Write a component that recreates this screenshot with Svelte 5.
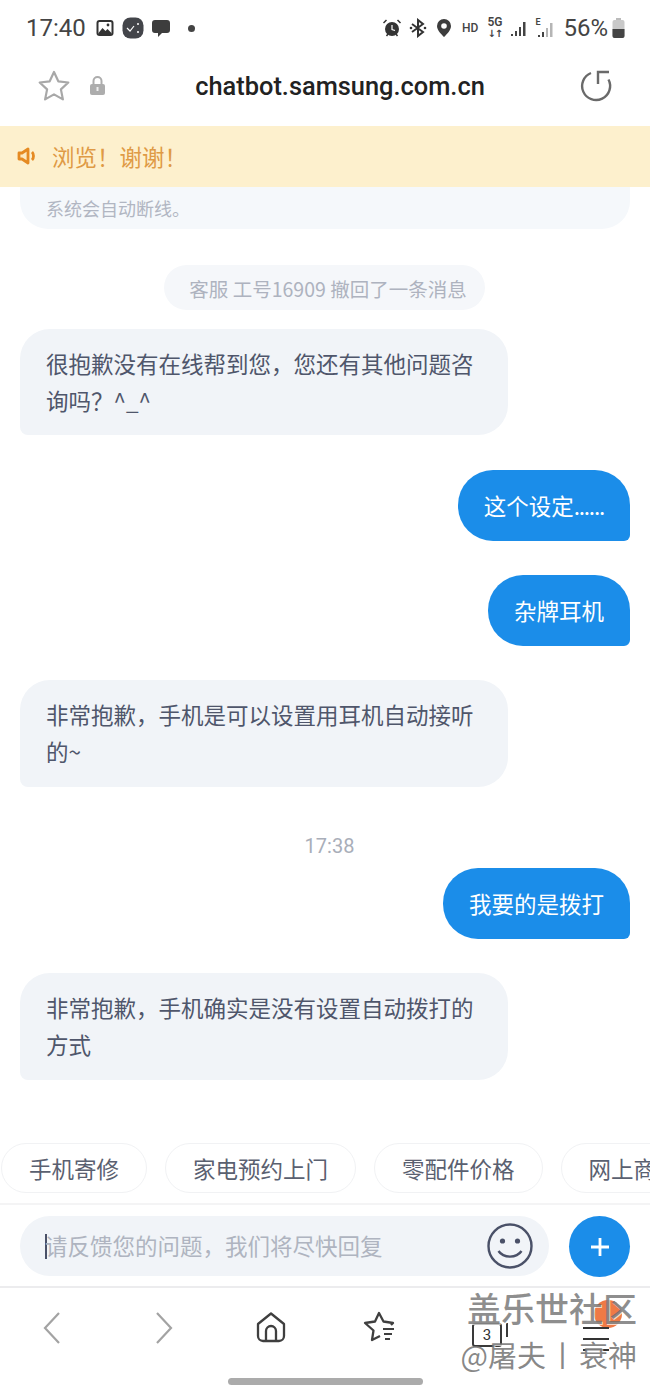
<script>
    // Quick reply chips under the chat
    let chips = ["手机寄修", "家电预约上门", "零配件价格", "网上商城"];
</script>

<div class="page">
    <div class="status">
        <span class="time">17:40</span>
        <svg class="ic" width="20" height="20" viewBox="0 0 20 20"><rect x="1.5" y="2" width="17" height="16" rx="3" fill="#333"/><rect x="3.5" y="4" width="13" height="12" rx="1" fill="#fff"/><path d="M3.5 15l4-5 3 3 2-2 4 4v1h-13z" fill="#333"/><circle cx="13" cy="7" r="1.4" fill="#333"/></svg>
        <svg class="ic" width="22" height="22" viewBox="0 0 22 22"><rect x="0.5" y="0.5" width="21" height="21" rx="8" fill="#43454a"/><path d="M5 11l3 3 4-5" stroke="#fff" stroke-width="1.2" fill="none"/><circle cx="16" cy="7" r="1" fill="#fff"/><circle cx="16" cy="15" r="1" fill="#fff"/></svg>
        <svg class="ic" width="20" height="20" viewBox="0 0 20 20"><path d="M4 2h12a3 3 0 0 1 3 3v7a3 3 0 0 1-3 3h-5l-4 4v-4H4a3 3 0 0 1-3-3V5a3 3 0 0 1 3-3z" fill="#3d3d3d"/></svg>
        <span class="dot"></span>
        <span class="spacer"></span>
        <svg class="ic" width="20" height="20" viewBox="0 0 19 20"><circle cx="9.5" cy="11" r="7" fill="#333"/><path d="M9.5 7v4.500l3 1" stroke="#fff" stroke-width="1.2" fill="none"/><path d="M1 5l3-3M18 5l-3-3M4 18l1.500-2M15 18l-1.500-2" stroke="#333" stroke-width="1.5"/></svg>
        <svg class="ic bt" width="18" height="20" viewBox="0 0 18 20"><path d="M3 6l11 8-5 4V2l5 4-11 8" stroke="#333" stroke-width="2" fill="none"/><circle cx="2" cy="10" r="1.3" fill="#333"/><circle cx="16" cy="10" r="1.3" fill="#333"/></svg>
        <svg class="ic pin" width="16" height="20" viewBox="0 0 16 20"><path d="M8 1a7 7 0 0 1 7 7c0 4.500-5 9-7 11-2-2-7-6.500-7-11a7 7 0 0 1 7-7z" fill="#3d3d3d"/><circle cx="8" cy="8" r="2.800" fill="#fff"/></svg>
        <span class="hd">HD</span>
        <span class="fiveg"><span>5G</span><span class="arrows">↓↑</span></span>
        <svg class="ic" width="18" height="18" viewBox="0 0 18 18"><g fill="#444"><rect x="1" y="15" width="2" height="2"/><rect x="5" y="12" width="2" height="5"/><rect x="9" y="8" width="2" height="9"/><rect x="13" y="3" width="2.500" height="14"/></g></svg>
        <span class="esig">
            <span class="e">E</span>
            <svg width="18" height="18" viewBox="0 0 18 18"><g fill="#444"><rect x="1" y="15" width="2" height="2"/><rect x="5" y="12" width="2" height="5"/></g><g fill="#b5b5b5"><rect x="9" y="8" width="2" height="9"/><rect x="13" y="3" width="2.500" height="14"/></g></svg>
        </span>
        <span class="pct">56%</span>
        <svg class="ic batt" width="13" height="21" viewBox="0 0 13 21"><rect x="4" y="0" width="5" height="3" fill="#bbb"/><rect x="0.5" y="2" width="12" height="18" rx="2" fill="#c9c9c9"/><path d="M0.5 11h12v7a2 2 0 0 1-2 2h-8a2 2 0 0 1-2-2z" fill="#444"/></svg>
    </div>

    <div class="urlbar">
        <svg width="34" height="34" viewBox="0 0 34 34"><path d="M17 3l4.300 9.300 10 1.200-7.400 6.900 2 10-8.900-5-8.900 5 2-10-7.400-6.900 10-1.200z" fill="none" stroke="#a8a8a8" stroke-width="2.200" stroke-linejoin="round"/></svg>
        <svg class="lock" width="17" height="22" viewBox="0 0 17 22"><path d="M4.500 9V6a4 4 0 0 1 8 0v3" fill="none" stroke="#adadad" stroke-width="2"/><rect x="1" y="9" width="15" height="11" rx="2" fill="#adadad"/><rect x="7.500" y="12" width="2" height="4" fill="#eee"/></svg>
        <span class="url">chatbot.samsung.com.cn</span>
        <svg width="34" height="34" viewBox="0 0 34 34"><path d="M12 4A14 14 0 1 0 29.500 10.500" fill="none" stroke="#6a6a6a" stroke-width="2.400"/><path d="M30 3H19V15" fill="none" stroke="#6a6a6a" stroke-width="2.400"/></svg>
    </div>

    <div class="notice">
        <svg width="22" height="18" viewBox="0 0 22 18"><path d="M2 6h3l6-4v14l-6-4H2z" fill="#fce9c0" stroke="#e58a22" stroke-width="2.800" stroke-linejoin="round"/><path d="M15 5c2 2 2 6 0 8" fill="none" stroke="#e58a22" stroke-width="2.800"/></svg>
        <span class="notice-text">浏览！谢谢！</span>
    </div>

    <div class="chat">
        <div class="bubble left cut"><span>系统会自动断线。</span></div>
        <div class="recall"><span>客服 工号16909 撤回了一条消息</span></div>
        <div class="bubble left b1">很抱歉没有在线帮到您，您还有其他问题咨询吗？^_^</div>
        <div class="bubble right r1">这个设定<span class="dots">......</span></div>
        <div class="bubble right r2">杂牌耳机</div>
        <div class="bubble left b2">非常抱歉，手机是可以设置用耳机自动接听的~</div>
        <div class="stamp">17:38</div>
        <div class="bubble right r3">我要的是拨打</div>
        <div class="bubble left b3">非常抱歉，手机确实是没有设置自动拨打的方式</div>
    </div>

    <div class="chips">
        {#each chips as chip}
            <span class="chip">{chip}</span>
        {/each}
    </div>

    <div class="inputbar">
        <div class="input">
            <span class="caret"></span>
            <span class="placeholder">请反馈您的问题，我们将尽快回复</span>
            <svg width="46" height="46" viewBox="0 0 46 46"><circle cx="23" cy="23" r="21.500" fill="none" stroke="#4a5168" stroke-width="2.400"/><circle cx="15.500" cy="18" r="2.600" fill="#4a5168"/><circle cx="30.500" cy="18" r="2.600" fill="#4a5168"/><path d="M11.500 28c5 7.500 18 7.500 23 0" fill="none" stroke="#4a5168" stroke-width="2.400"/></svg>
        </div>
        <div class="plus">
            <svg width="22" height="22" viewBox="0 0 22 22"><path d="M11 2v18M2 11h18" stroke="#fff" stroke-width="2.800"/></svg>
        </div>
    </div>

    <div class="nav">
        <svg width="20" height="34" viewBox="0 0 20 34"><path d="M17 2L3 17l14 15" fill="none" stroke="#a3a3a3" stroke-width="2.200"/></svg>
        <svg width="20" height="34" viewBox="0 0 20 34"><path d="M3 2l14 15L3 32" fill="none" stroke="#a3a3a3" stroke-width="2.200"/></svg>
        <svg width="32" height="32" viewBox="0 0 32 32"><path d="M16 2.500L3 13v12a5 5 0 0 0 5 5h16a5 5 0 0 0 5-5V13z" fill="none" stroke="#3f3f3f" stroke-width="2.300" stroke-linejoin="round"/><path d="M11 30V20a5 5 0 0 1 10 0v10" fill="none" stroke="#3f3f3f" stroke-width="2.300"/></svg>
        <svg width="34" height="32" viewBox="0 0 34 32"><path d="M18 25l-8 4 1.500-9.500L3 12l10-1.500L17 2l4.500 8.500L31 12l-2 2" fill="none" stroke="#3f3f3f" stroke-width="2.300" stroke-linejoin="round"/><path d="M21 18h11M22 23h8M23 28h5" stroke="#3f3f3f" stroke-width="2"/></svg>
        <div class="tabs">
            <span class="tabcount">3</span>
            <span class="tabedge"></span>
        </div>
        <div class="menu">
            <span class="badge"></span>
            <span class="line"></span>
            <span class="line"></span>
            <span class="line"></span>
        </div>
    </div>
    <div class="handle-row"><span class="handle"></span></div>

    <div class="watermark">
        <div class="wm1">盖乐世社区</div>
        <div class="wm2">@屠夫<span class="bar">丨</span>衰神</div>
    </div>
</div>

<style>
    :global(body) {
        margin: 0;
        background: #fff;
    }

    .page {
        position: relative;
        width: 650px;
        height: 1394px;
        overflow: hidden;
        background: #fff;
        display: flex;
        flex-direction: column;
        font-family: "Noto Sans CJK SC", "Noto Sans", sans-serif;
    }

    /* status bar */
    .status {
        height: 56px;
        box-sizing: border-box;
        padding: 0 25px 0 26px;
        display: flex;
        align-items: center;
        flex-shrink: 0;
        color: #444;
    }
    .time {
        font-family: Roboto, sans-serif;
        font-size: 24px;
        margin-right: 9px;
    }
    .ic {
        margin-right: 7px;
        flex-shrink: 0;
    }
    .bt {
        margin-right: 9px;
    }
    .batt {
        margin-right: 0;
    }
    .dot {
        width: 7px;
        height: 7px;
        border-radius: 50%;
        background: #444;
        margin-left: 10px;
    }
    .spacer {
        flex: 1;
    }
    .hd {
        font-family: Roboto, sans-serif;
        font-size: 12px;
        font-weight: 500;
        margin: 0 9px 0 3px;
    }
    .fiveg {
        display: flex;
        flex-direction: column;
        font-family: Roboto, sans-serif;
        font-size: 12px;
        font-weight: 600;
        line-height: 11px;
        margin-right: 8px;
    }
    .arrows {
        font-family: "DejaVu Sans", sans-serif;
        font-size: 10px;
        font-weight: 700;
        letter-spacing: -1px;
    }
    .esig {
        position: relative;
        display: flex;
        margin: 2px 8px 0 0;
        padding-left: 2px;
    }
    .e {
        position: absolute;
        left: 0;
        top: -3px;
        font-family: Roboto, sans-serif;
        font-size: 9px;
        font-weight: 600;
    }
    .pct {
        font-family: Roboto, sans-serif;
        font-size: 24px;
        margin-right: 4px;
    }

    /* address bar */
    .urlbar {
        height: 70px;
        flex-shrink: 0;
        box-sizing: border-box;
        padding: 0 37px 10px 37px;
        display: flex;
        align-items: center;
    }
    .lock {
        margin-left: 18px;
    }
    .url {
        flex: 1;
        text-align: center;
        font-family: Roboto, sans-serif;
        font-weight: 500;
        font-size: 25.4px;
        color: #222;
        margin-right: 5px;
    }

    /* scrolling notice */
    .notice {
        height: 61px;
        flex-shrink: 0;
        background: #fdf0cd;
        display: flex;
        align-items: center;
        padding: 0 0 2px 17px;
        box-sizing: border-box;
        position: relative;
        z-index: 1;
    }
    .notice-text {
        font-size: 22.5px;
        color: #df9a45;
        margin-left: 13px;
    }

    /* chat */
    .chat {
        height: 946px;
        flex-shrink: 0;
        overflow: hidden;
        box-sizing: border-box;
        padding: 0 20px;
        display: flex;
        flex-direction: column;
    }
    .bubble {
        font-size: 22.5px;
        line-height: 37px;
        box-sizing: border-box;
    }
    .left {
        width: 488px;
        background: #f1f4f8;
        color: #4f566b;
        padding: 16px 26px;
        border-radius: 30px 30px 30px 8px;
    }
    .cut {
        width: 610px;
        height: 42px;
        padding: 0 26px;
        background: #f5f8fb;
        border-radius: 0 0 28px 28px;
        color: #b1b6c2;
        font-size: 18px;
        line-height: 43px;
    }
    .recall {
        margin-top: 36px;
        align-self: center;
        display: flex;
    }
    .recall span {
        height: 45px;
        line-height: 47px;
        background: #f5f7fa;
        border-radius: 23px;
        padding: 0 18px 0 25px;
        font-size: 19.5px;
        color: #aeb3bf;
        margin-right: 1px;
    }
    .b1 {
        margin-top: 19px;
    }
    .right {
        align-self: flex-end;
        background: #1b8de9;
        color: #fff;
        height: 71px;
        line-height: 71px;
        padding: 0 26px;
        border-radius: 35px 35px 6px 35px;
    }
    .dots {
        letter-spacing: -1.2px;
    }
    .r1 {
        margin-top: 35px;
    }
    .r2 {
        margin-top: 34px;
    }
    .b2 {
        margin-top: 34px;
        padding-bottom: 17px;
    }
    .stamp {
        margin-top: 48px;
        padding-left: 9px;
        text-align: center;
        font-family: Roboto, sans-serif;
        font-size: 20px;
        line-height: 22px;
        color: #a9aeb9;
    }
    .r3 {
        margin-top: 11px;
    }
    .b3 {
        margin-top: 34px;
        padding-bottom: 17px;
    }

    /* quick replies */
    .chips {
        flex-shrink: 0;
        height: 72px;
        box-sizing: border-box;
        padding: 10px 0 0 1px;
        display: flex;
        gap: 18px;
        overflow: hidden;
        border-bottom: 2px solid #f4f4f5;
    }
    .chip {
        flex-shrink: 0;
        height: 50px;
        line-height: 49px;
        box-sizing: border-box;
        border: 1.5px solid #f1f2f4;
        border-radius: 25px;
        padding: 0 27px;
        font-size: 22.5px;
        color: #5a6070;
        background: #fff;
    }

    /* input row */
    .inputbar {
        flex-shrink: 0;
        height: 83px;
        box-sizing: border-box;
        padding: 11px 20px 0;
        display: flex;
        justify-content: space-between;
        border-bottom: 2px solid #ececee;
    }
    .input {
        width: 529px;
        height: 60px;
        box-sizing: border-box;
        background: #f1f4f8;
        border-radius: 30px;
        padding: 0 16px 0 25px;
        display: flex;
        align-items: center;
    }
    .caret {
        width: 2px;
        height: 25px;
        background: #4a5168;
        flex-shrink: 0;
    }
    .placeholder {
        flex: 1;
        font-size: 22.5px;
        line-height: 54px;
        color: #afb4c0;
        margin: -2px 0 0 -2px;
    }
    .plus {
        width: 61px;
        height: 61px;
        border-radius: 50%;
        background: #1b8de9;
        display: flex;
        align-items: center;
        justify-content: center;
    }

    /* bottom nav */
    .nav {
        flex-shrink: 0;
        height: 90px;
        box-sizing: border-box;
        padding: 8px 0 0 42px;
        display: flex;
        align-items: flex-start;
    }
    .nav svg:nth-child(1) {
        margin: 15px 92px 0 0;
    }
    .nav svg:nth-child(2) {
        margin: 15px 81px 0 0;
    }
    .nav svg:nth-child(3) {
        margin: 15px 75px 0 0;
    }
    .nav svg:nth-child(4) {
        margin: 15px 0 0 0;
    }
    .tabs {
        margin: 27px 0 0 76px;
        width: 26px;
        height: 20px;
        border: 2px solid #3a3a3a;
        border-radius: 3px;
        position: relative;
        text-align: center;
    }
    .tabcount {
        font-family: Roboto, sans-serif;
        font-size: 15px;
        line-height: 20px;
        color: #333;
        display: block;
    }
    .tabedge {
        position: absolute;
        right: -8px;
        top: -2px;
        width: 2px;
        height: 14px;
        background: #3a3a3a;
    }
    .menu {
        margin: 31px 0 0 81px;
        position: relative;
        width: 26px;
        display: flex;
        flex-direction: column;
        gap: 9px;
    }
    .line {
        display: block;
        position: relative;
        height: 2px;
        background: #333;
    }
    .badge {
        position: absolute;
        left: 11px;
        top: -27px;
        width: 28px;
        height: 28px;
        border-radius: 50%;
        background: #ef7a45;
    }
    .handle-row {
        flex: 1;
        display: flex;
        justify-content: center;
    }
    .handle {
        width: 195px;
        height: 7px;
        border-radius: 4px;
        background: #ababab;
    }

    /* forum watermark over the nav */
    .watermark {
        position: absolute;
        right: 13px;
        top: 1287px;
        text-align: right;
        white-space: nowrap;
        text-shadow: 1px 1px 0 rgba(255, 255, 255, 0.7);
    }
    .wm1 {
        font-size: 34px;
        font-weight: 500;
        line-height: 42px;
        color: rgba(105, 105, 105, 0.75);
    }
    .wm2 {
        font-size: 29px;
        line-height: 36px;
        margin-top: 7px;
        color: rgba(115, 115, 115, 0.85);
    }
    .bar {
        margin: 0 2px;
    }
</style>
